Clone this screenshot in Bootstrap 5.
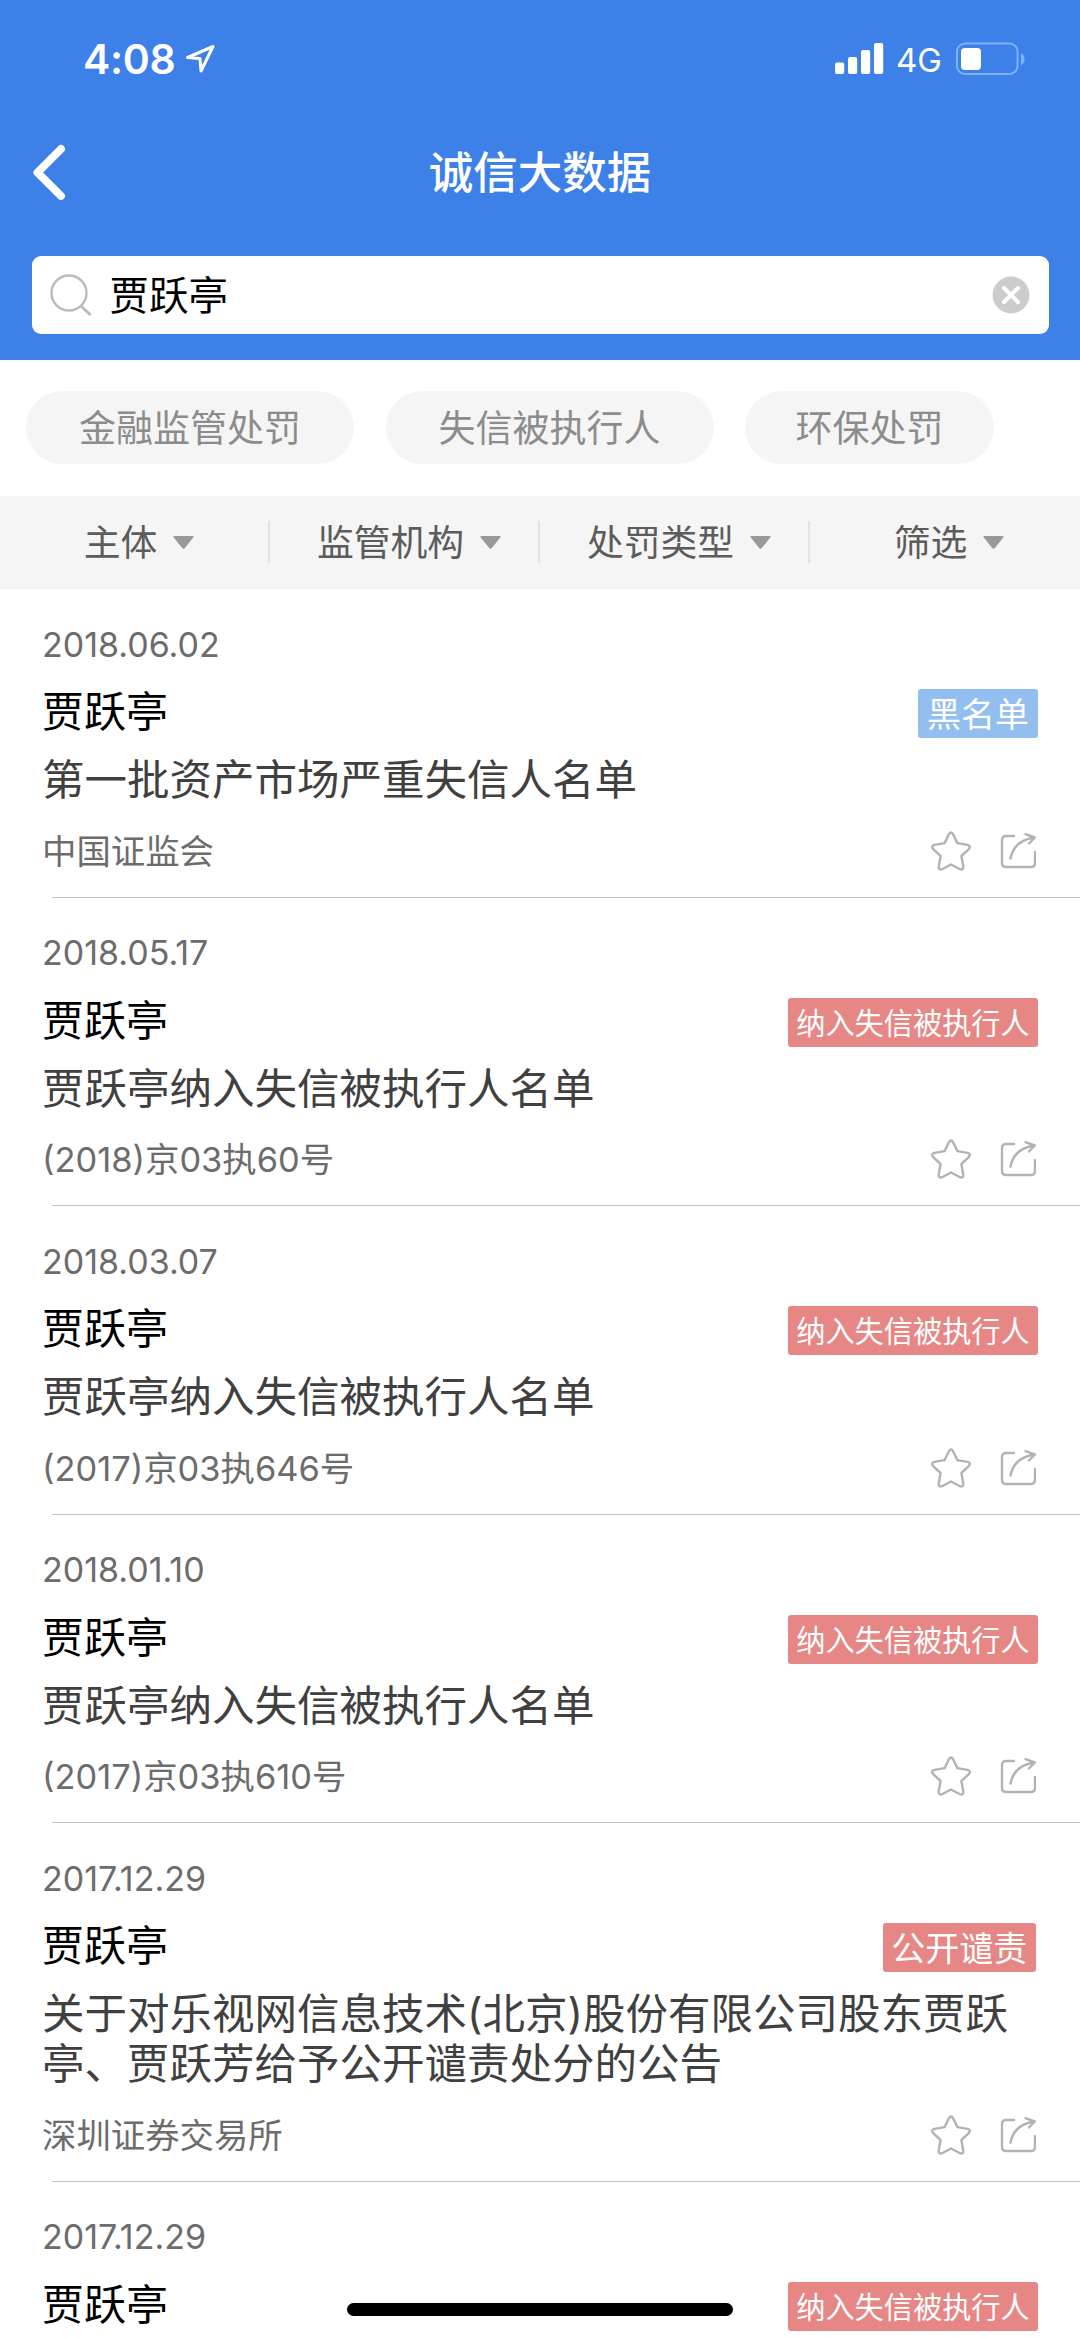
<!DOCTYPE html>
<html lang="zh-CN">
<head>
<meta charset="utf-8">
<meta name="viewport" content="width=device-width, initial-scale=1">
<title>诚信大数据</title>
<link href="https://cdn.jsdelivr.net/npm/bootstrap@5.3.0/dist/css/bootstrap.min.css" rel="stylesheet">
<style>
  body { font-family: Inter, "Noto Sans CJK SC", sans-serif; background: #fff; width: 1080px; height: 2337px; overflow: hidden; }
  .app-head { background: #3c80e8; height: 360px; }
  .status-bar { height: 116px; padding: 2px 55px 0 83px; }
  .clock { font-size: 41px; font-weight: 600; line-height: 1; letter-spacing: -.3px; padding-top: 1px; }
  .network { font-size: 33px; line-height: 1; margin: 2px 14px 0 12px; }
  .title-bar { height: 112px; }
  .title-bar .heading { font-size: 44.5px; font-weight: 500; line-height: 1; padding-top: 2px; }
  .back { left: 32px; top: 28px; }
  .search-box { margin: 27.5px 31.5px 0; height: 78.5px; border-radius: 9px; padding: 0 19px 0 17px; }
  .search-text { font-size: 39.5px; line-height: 1; color: #000; margin-left: 17px; padding-top: 3px; }
  .chips { height: 135.5px; padding: 31px 0 0 26px; gap: 31.5px; }
  .chip { height: 73px; border-radius: 37px; background: #f5f5f5; color: #8c8c8c; font-size: 37px; width: 328px; padding-top: 2px; }
  .chip-short { width: 249px; }
  .filters { height: 93.5px; background: #f5f5f5; color: #5c5c5c; font-size: 36.8px; line-height: 1; }
  .filter { gap: 16px; padding-left: 10px; border-right: 2px solid #e2e2e2; height: 42px; }
  .filter > span { padding-top: 2px; }
  .filter:last-child { border-right-color: transparent; }
  .record { padding: 33.5px 42px 0; height: 308.5px; }
  .record-long { height: 358.5px; }
  .record-cut { height: 155px; overflow: hidden; }
  .record:not(.record-cut)::after { content: ""; position: absolute; left: 52px; right: 0; bottom: 0; height: 1px; background: #c6c6c6; }
  .date { font-size: 34px; line-height: 44px; color: #6c6c6c; }
  .who { height: 49px; margin-top: 22.5px; font-size: 42px; line-height: 46px; color: #000; }
  .desc { margin-top: 17px; font-size: 42.5px; line-height: 49.8px; color: #404040; white-space: nowrap; }
  .source-row { margin-top: 26px; height: 40px; }
  .source { font-size: 34.4px; line-height: 40px; color: #6c6c6c; padding-top: 2px; }
  .tag { height: 49px; border-radius: 3px; color: #fff; font-size: 34px; line-height: 51px; background: #e68785; text-align: center; width: 120px; }
  .tag-blue { background: #92bff0; }
  .tag-four { width: 153.5px; margin-right: 2px; }
  .tag-wide { width: 250px; font-size: 29.2px; }
  .icons { gap: 28px; padding-right: 2px; }
  .home-bar { left: 347px; top: 2302.5px; width: 386px; height: 13.5px; border-radius: 7px; background: #000; }
</style>
</head>
<body class="position-relative">
<svg width="0" height="0" class="position-absolute">
  <symbol id="star" viewBox="0 0 42 42"><path d="M18.9 4.3Q21 .7 23.1 4.3L27.4 13.1L37.6 14.9Q41.400 16 38.800 19.100L31.400 26L33.300 36.600Q33.500 40.400 30 39.200L21 34.500L12 39.200Q8.500 40.400 8.700 36.600L10.600 26L3.200 19.100Q.600 16 4.400 14.900L14.600 13.100Z" fill="none" stroke="#b3b3b3" stroke-width="2.400" stroke-linejoin="round"/></symbol>
  <symbol id="share" viewBox="0 0 36 38"><g fill="none" stroke="#b3b3b3" stroke-width="2.400" stroke-linecap="round" stroke-linejoin="round"><path d="M14 4H6Q2 4 2 8V31Q2 35 6 35H31Q35 35 35 31V20"/><path d="M10.500 26.500Q14 8.500 34.500 5.500M25.500 2.200L34.800 5.500L29 11.500"/></g></symbol>
  <symbol id="caret" viewBox="0 0 21 13"><path d="M1.500 0H19.500Q21.300 0 20.300 1.600L12 11.800Q10.500 13.600 9 11.800L.700 1.600Q-.300 0 1.500 0Z" fill="#999"/></symbol>
</svg>

<header class="app-head text-white">
  <div class="status-bar d-flex align-items-center justify-content-between">
    <div class="d-flex align-items-center">
      <span class="clock">4:08</span>
      <svg class="ms-2" width="32" height="32" viewBox="0 0 32 32"><path d="M30 3.500L4.500 14.500L17 15.500L18 28Z" fill="none" stroke="#fff" stroke-width="3" stroke-linejoin="round"/></svg>
    </div>
    <div class="d-flex align-items-center">
      <svg width="49" height="32" viewBox="0 0 49 32" fill="#fff"><rect x="0" y="19.500" width="9.200" height="11.500" rx="2"/><rect x="13" y="14" width="9.200" height="17" rx="2"/><rect x="26" y="7" width="9.200" height="24" rx="2"/><rect x="39" y="0" width="9.200" height="31" rx="2"/></svg>
      <span class="network">4G</span>
      <svg width="69" height="34" viewBox="0 0 69 34"><rect x="1" y="1.500" width="60.500" height="30.500" rx="8" fill="none" stroke="#7fb1fa" stroke-width="2"/><rect x="5" y="6" width="20" height="22" rx="4" fill="#fff"/><path d="M65 11Q68.500 13 68.500 17T65 23Z" fill="#7fb1fa"/></svg>
    </div>
  </div>
  <div class="title-bar position-relative d-flex align-items-center justify-content-center">
    <svg class="back position-absolute" width="36" height="60" viewBox="0 0 36 60"><path d="M29 5L5.500 28.500L29 52" fill="none" stroke="#fff" stroke-width="8" stroke-linecap="round" stroke-linejoin="round"/></svg>
    <span class="heading">诚信大数据</span>
  </div>
  <div class="search-box bg-white d-flex align-items-center">
    <svg width="44" height="44" viewBox="0 0 44 44" fill="none" stroke="#bbb" stroke-width="2.400"><circle cx="20" cy="20" r="17.500"/><path d="M32 33L41.500 42" stroke-width="3"/></svg>
    <span class="search-text">贾跃亭</span>
    <svg class="ms-auto" width="38" height="38" viewBox="0 0 38 38"><circle cx="19" cy="19" r="18.500" fill="#ccc"/><path d="M12 12L26 26M26 12L12 26" stroke="#fff" stroke-width="4" stroke-linecap="round"/></svg>
  </div>
</header>

<nav class="chips d-flex">
  <span class="chip d-flex align-items-center justify-content-center">金融监管处罚</span>
  <span class="chip d-flex align-items-center justify-content-center">失信被执行人</span>
  <span class="chip chip-short d-flex align-items-center justify-content-center">环保处罚</span>
</nav>

<div class="filters row g-0 align-items-center">
  <div class="filter col d-flex align-items-center justify-content-center"><span>主体</span><svg width="21" height="13"><use href="#caret"/></svg></div>
  <div class="filter col d-flex align-items-center justify-content-center"><span>监管机构</span><svg width="21" height="13"><use href="#caret"/></svg></div>
  <div class="filter col d-flex align-items-center justify-content-center"><span>处罚类型</span><svg width="21" height="13"><use href="#caret"/></svg></div>
  <div class="filter col d-flex align-items-center justify-content-center"><span>筛选</span><svg width="21" height="13"><use href="#caret"/></svg></div>
</div>

<main>
  <article class="record position-relative">
    <div class="date">2018.06.02</div>
    <div class="who d-flex justify-content-between"><span>贾跃亭</span><span class="tag tag-blue">黑名单</span></div>
    <div class="desc">第一批资产市场严重失信人名单</div>
    <div class="source-row d-flex justify-content-between align-items-center"><span class="source">中国证监会</span><span class="icons d-flex align-items-center"><svg width="42" height="42"><use href="#star"/></svg><svg width="36" height="38"><use href="#share"/></svg></span></div>
  </article>
  <article class="record position-relative">
    <div class="date">2018.05.17</div>
    <div class="who d-flex justify-content-between"><span>贾跃亭</span><span class="tag tag-wide">纳入失信被执行人</span></div>
    <div class="desc">贾跃亭纳入失信被执行人名单</div>
    <div class="source-row d-flex justify-content-between align-items-center"><span class="source">(2018)京03执60号</span><span class="icons d-flex align-items-center"><svg width="42" height="42"><use href="#star"/></svg><svg width="36" height="38"><use href="#share"/></svg></span></div>
  </article>
  <article class="record position-relative">
    <div class="date">2018.03.07</div>
    <div class="who d-flex justify-content-between"><span>贾跃亭</span><span class="tag tag-wide">纳入失信被执行人</span></div>
    <div class="desc">贾跃亭纳入失信被执行人名单</div>
    <div class="source-row d-flex justify-content-between align-items-center"><span class="source">(2017)京03执646号</span><span class="icons d-flex align-items-center"><svg width="42" height="42"><use href="#star"/></svg><svg width="36" height="38"><use href="#share"/></svg></span></div>
  </article>
  <article class="record position-relative">
    <div class="date">2018.01.10</div>
    <div class="who d-flex justify-content-between"><span>贾跃亭</span><span class="tag tag-wide">纳入失信被执行人</span></div>
    <div class="desc">贾跃亭纳入失信被执行人名单</div>
    <div class="source-row d-flex justify-content-between align-items-center"><span class="source">(2017)京03执610号</span><span class="icons d-flex align-items-center"><svg width="42" height="42"><use href="#star"/></svg><svg width="36" height="38"><use href="#share"/></svg></span></div>
  </article>
  <article class="record record-long position-relative">
    <div class="date">2017.12.29</div>
    <div class="who d-flex justify-content-between"><span>贾跃亭</span><span class="tag tag-four">公开谴责</span></div>
    <div class="desc">关于对乐视网信息技术(北京)股份有限公司股东贾跃<br>亭、贾跃芳给予公开谴责处分的公告</div>
    <div class="source-row d-flex justify-content-between align-items-center"><span class="source">深圳证券交易所</span><span class="icons d-flex align-items-center"><svg width="42" height="42"><use href="#star"/></svg><svg width="36" height="38"><use href="#share"/></svg></span></div>
  </article>
  <article class="record record-cut position-relative">
    <div class="date">2017.12.29</div>
    <div class="who d-flex justify-content-between"><span>贾跃亭</span><span class="tag tag-wide">纳入失信被执行人</span></div>
  </article>
</main>
<div class="home-bar position-absolute"></div>
<script src="https://cdn.jsdelivr.net/npm/bootstrap@5.3.0/dist/js/bootstrap.bundle.min.js"></script>
</body>
</html>
